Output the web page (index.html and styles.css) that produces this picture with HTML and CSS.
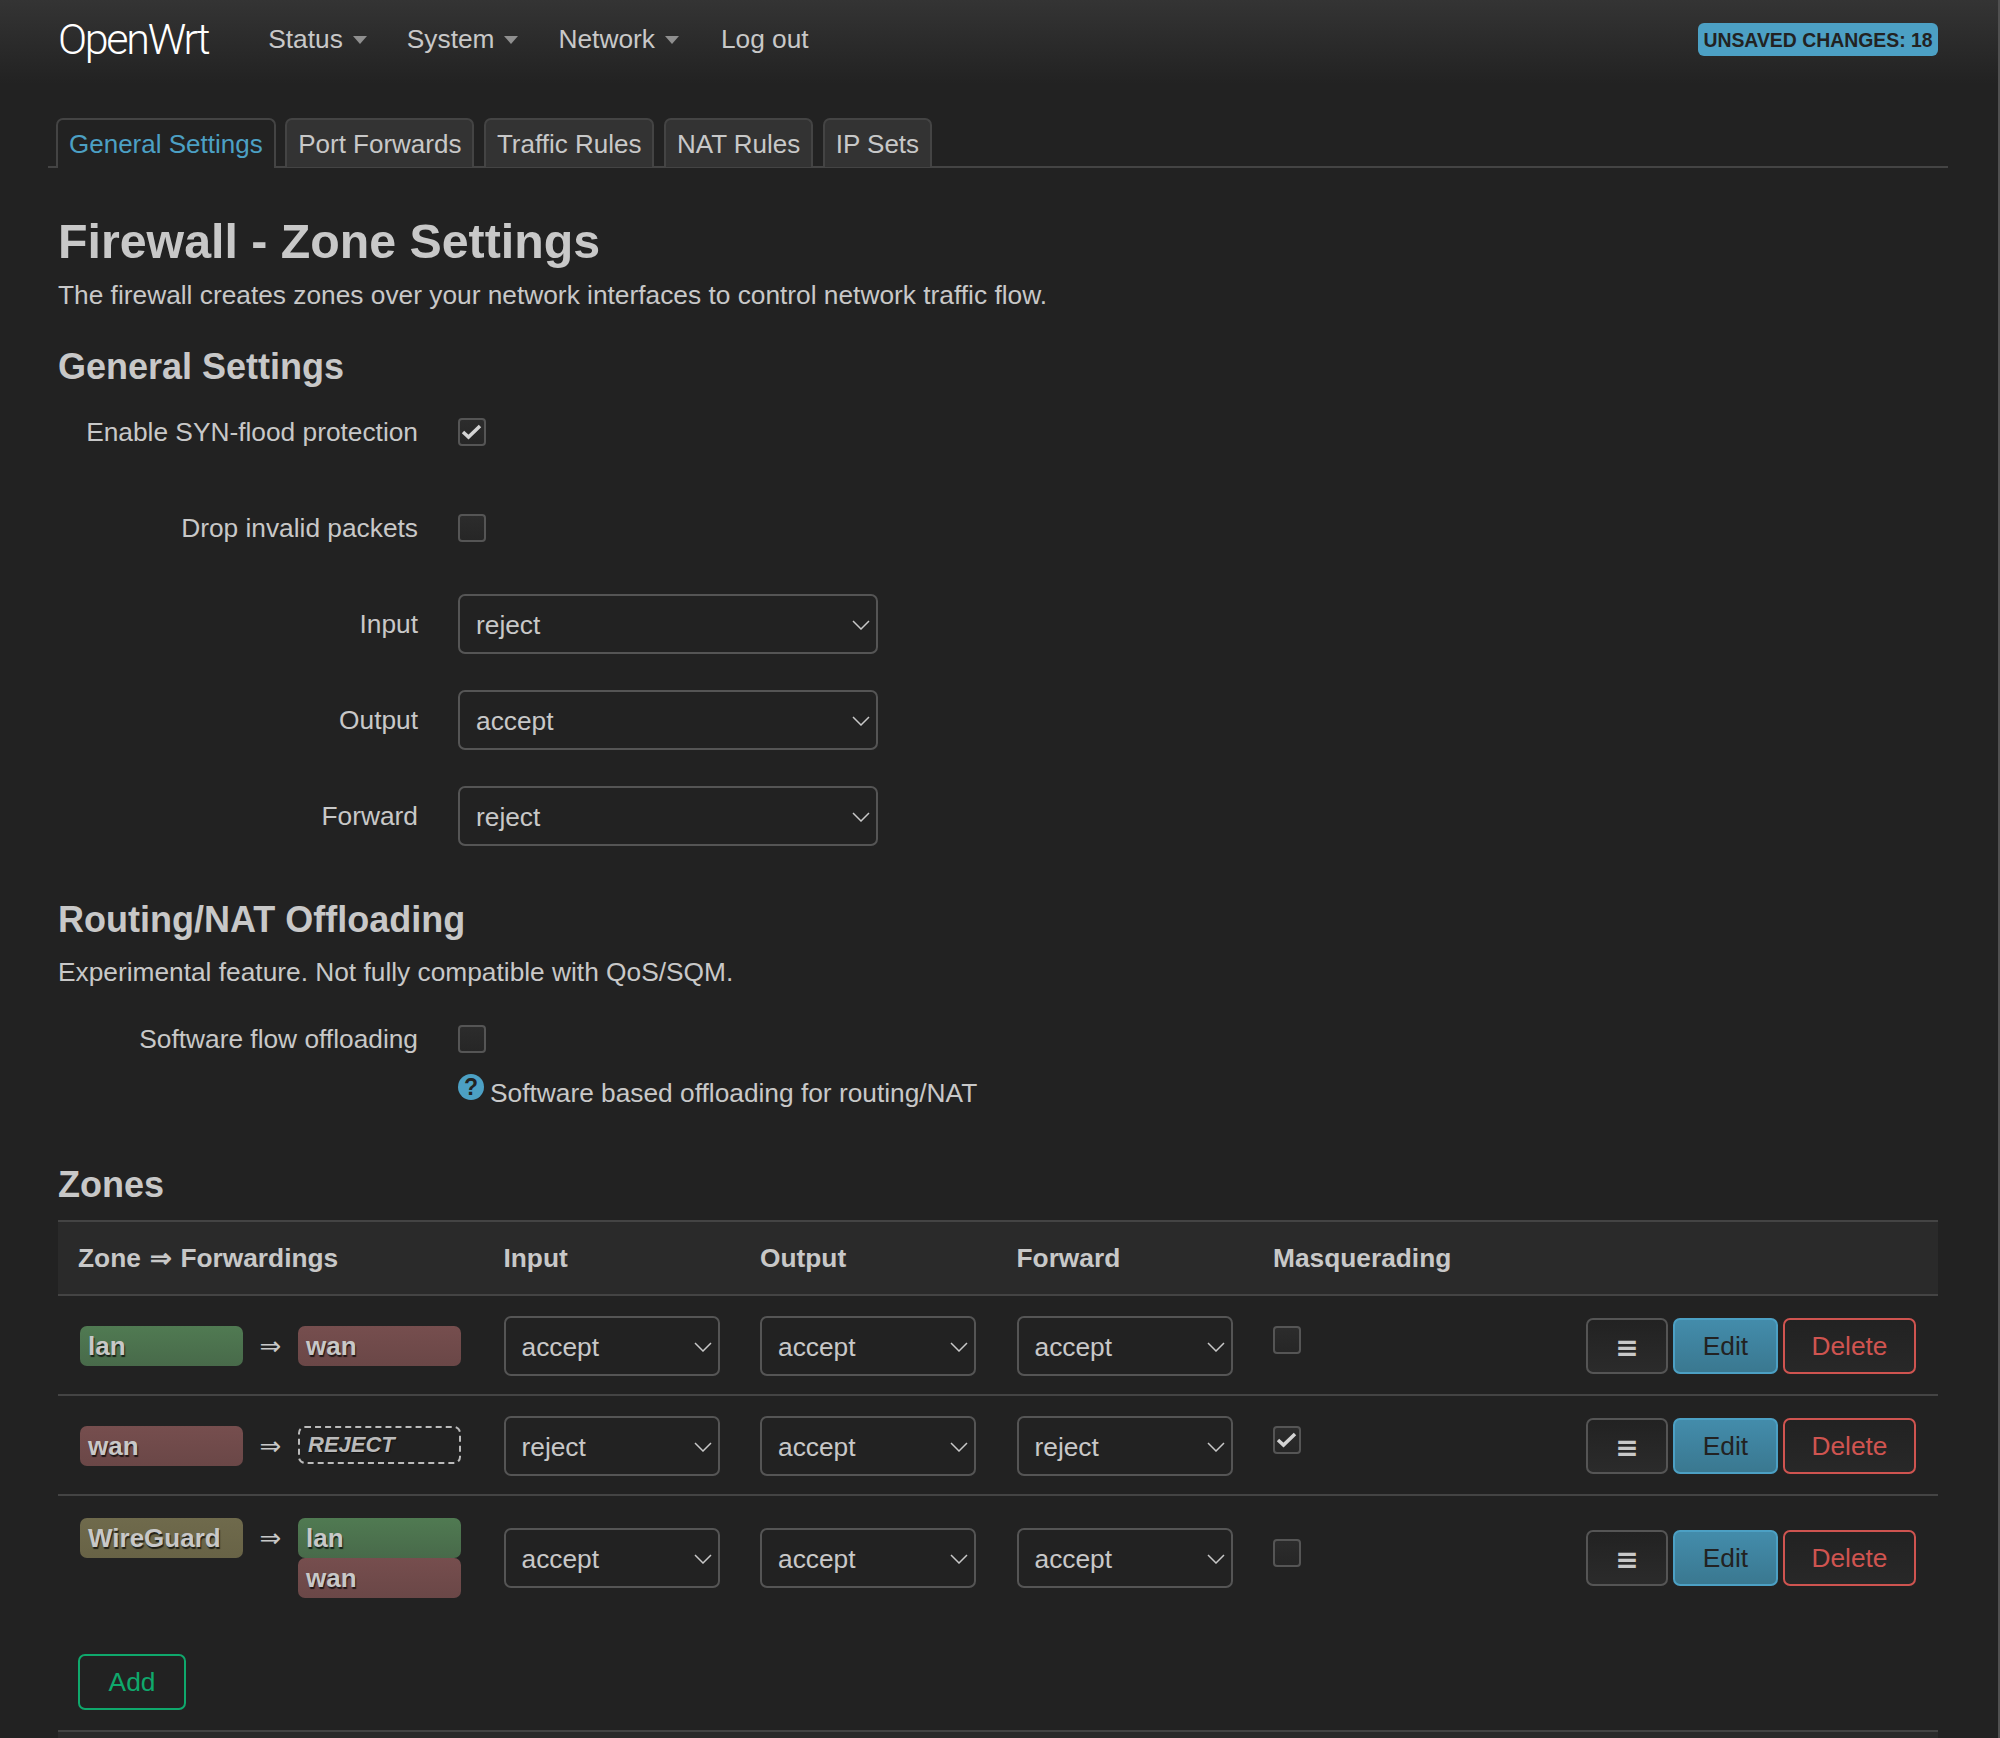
FILE: index.html
```html
<!DOCTYPE html>
<html lang="en">
<head>
<meta charset="utf-8">
<title>Firewall - Zone Settings - OpenWrt</title>
<link rel="stylesheet" href="styles.css">
</head>
<body>
<header class="topbar">
  <a class="brand">OpenWrt</a>
  <nav class="menu">
    <a class="menu-item">Status<i class="caret"></i></a>
    <a class="menu-item">System<i class="caret"></i></a>
    <a class="menu-item">Network<i class="caret"></i></a>
    <a class="menu-item logout">Log out</a>
  </nav>
  <span class="unsaved">UNSAVED CHANGES: 18</span>
</header>
<main class="page">
  <ul class="tabs">
    <li class="tab active">General Settings</li>
    <li class="tab">Port Forwards</li>
    <li class="tab">Traffic Rules</li>
    <li class="tab">NAT Rules</li>
    <li class="tab">IP Sets</li>
  </ul>
  <h2 class="title">Firewall - Zone Settings</h2>
  <p class="desc">The firewall creates zones over your network interfaces to control network traffic flow.</p>
  <h3 class="section first">General Settings</h3>
  <div class="row"><label class="row-label">Enable SYN-flood protection</label>
    <span class="check"><svg viewBox="0 0 24 24"><path d="M3 12l5.500 5L20 6" /></svg></span></div>
  <div class="row"><label class="row-label">Drop invalid packets</label><span class="check"></span></div>
  <div class="row"><label class="row-label">Input</label>
    <span class="select wide">reject<svg viewBox="0 0 18 10"><path d="M1 1l8 8 8-8"/></svg></span></div>
  <div class="row"><label class="row-label">Output</label>
    <span class="select wide">accept<svg viewBox="0 0 18 10"><path d="M1 1l8 8 8-8"/></svg></span></div>
  <div class="row"><label class="row-label">Forward</label>
    <span class="select wide">reject<svg viewBox="0 0 18 10"><path d="M1 1l8 8 8-8"/></svg></span></div>
  <h3 class="section routing">Routing/NAT Offloading</h3>
  <p class="desc desc-routing">Experimental feature. Not fully compatible with QoS/SQM.</p>
  <div class="row row-soft"><label class="row-label">Software flow offloading</label><span class="check"></span></div>
  <div class="help-row">
    <span class="help-icon">?</span><span>Software based offloading for routing/NAT</span>
  </div>
  <h3 class="section zones">Zones</h3>
  <table class="zone-table">
    <thead>
      <tr>
        <th class="col-zone">Zone ⇒ Forwardings</th>
        <th class="col-sel">Input</th>
        <th class="col-sel">Output</th>
        <th class="col-sel">Forward</th>
        <th class="col-masq">Masquerading</th>
        <th class="col-act"></th>
      </tr>
    </thead>
    <tbody>
      <tr>
        <td><div class="zone-flow"><span class="zone lan">lan</span><span class="arrow">⇒</span><span class="zone-list"><span class="zone wan">wan</span></span></div></td>
        <td><span class="select">accept<svg viewBox="0 0 18 10"><path d="M1 1l8 8 8-8"/></svg></span></td>
        <td><span class="select">accept<svg viewBox="0 0 18 10"><path d="M1 1l8 8 8-8"/></svg></span></td>
        <td><span class="select">accept<svg viewBox="0 0 18 10"><path d="M1 1l8 8 8-8"/></svg></span></td>
        <td class="cell-masq"><span class="check"></span></td>
        <td><div class="actions"><button class="btn drag">≡</button><button class="btn edit">Edit</button><button class="btn del">Delete</button></div></td>
      </tr>
      <tr>
        <td><div class="zone-flow"><span class="zone wan">wan</span><span class="arrow">⇒</span><span class="zone-list"><span class="zone reject">REJECT</span></span></div></td>
        <td><span class="select">reject<svg viewBox="0 0 18 10"><path d="M1 1l8 8 8-8"/></svg></span></td>
        <td><span class="select">accept<svg viewBox="0 0 18 10"><path d="M1 1l8 8 8-8"/></svg></span></td>
        <td><span class="select">reject<svg viewBox="0 0 18 10"><path d="M1 1l8 8 8-8"/></svg></span></td>
        <td class="cell-masq"><span class="check"><svg viewBox="0 0 24 24"><path d="M3 12l5.500 5L20 6" /></svg></span></td>
        <td><div class="actions"><button class="btn drag">≡</button><button class="btn edit">Edit</button><button class="btn del">Delete</button></div></td>
      </tr>
      <tr>
        <td><div class="zone-flow"><span class="zone wg">WireGuard</span><span class="arrow">⇒</span><span class="zone-list"><span class="zone lan">lan</span><span class="zone wan">wan</span></span></div></td>
        <td><span class="select">accept<svg viewBox="0 0 18 10"><path d="M1 1l8 8 8-8"/></svg></span></td>
        <td><span class="select">accept<svg viewBox="0 0 18 10"><path d="M1 1l8 8 8-8"/></svg></span></td>
        <td><span class="select">accept<svg viewBox="0 0 18 10"><path d="M1 1l8 8 8-8"/></svg></span></td>
        <td class="cell-masq"><span class="check"></span></td>
        <td><div class="actions"><button class="btn drag">≡</button><button class="btn edit">Edit</button><button class="btn del">Delete</button></div></td>
      </tr>
    </tbody>
  </table>
  <div class="add-row"><button class="btn add">Add</button></div>
  <div class="next-section"></div>
</main>
</body>
</html>
```
FILE: styles.css
```css
* { box-sizing: border-box; }
html, body { margin: 0; padding: 0; }
body {
  width: 2000px;
  height: 1738px;
  overflow: hidden;
  background: #222;
  color: #c8c8c8;
  font-family: "Liberation Sans", Arial, sans-serif;
  font-size: 26.300px;
  line-height: 36px;
  border-right: 2px solid #505050;
}
.topbar {
  height: 84px;
  display: flex;
  align-items: center;
  padding: 0 60px 6px 58px;
  background: linear-gradient(#343434, #222);
}
.brand {
  font-family: Roboto, sans-serif;
  font-weight: 300;
  font-size: 43px;
  letter-spacing: -2.300px;
  color: #fff;
  margin-right: 60px;
}
.menu { display: flex; gap: 40px; flex: 1; }
.menu-item { display: flex; align-items: center; color: #c8c8c8; }
.logout { margin-left: 2px; }
.caret {
  width: 0;
  height: 0;
  margin-left: 10px;
  margin-top: 2px;
  border-left: 7.5px solid transparent;
  border-right: 7.5px solid transparent;
  border-top: 8px solid #8f8f8f;
}
.unsaved {
  height: 33px;
  width: 240px;
  padding-top: 1px;
  border-radius: 6px;
  background: #4ca0c4;
  color: #222;
  font-weight: 700;
  font-size: 19.400px;
  line-height: 33px;
  text-align: center;
  white-space: nowrap;
}
.page { padding: 34px 60px 0 58px; position: relative; }
.tabs {
  display: flex;
  gap: 9.500px;
  list-style: none;
  margin: 0 -10px 0 -10px;
  padding: 0 0 0 8px;
  height: 50px;
  border-bottom: 2px solid #444;
}
.tab {
  height: 49px;
  padding: 6px 11px 0;
  background: #333;
  border: 2px solid #444;
  border-bottom: 0;
  border-radius: 7px 7px 0 0;
  font-size: 26px;
  white-space: nowrap;
}
.tab.active {
  height: 50px;
  background: #222;
  color: #4ca0c4;
}
.title {
  margin: 44px 0 0;
  font-size: 48.300px;
  line-height: 58px;
  font-weight: 700;
}
.desc { margin: 0; line-height: 36px; }
.title + .desc { margin-top: 7px; }
.section {
  margin: 0;
  font-size: 36px;
  line-height: 44px;
  font-weight: 700;
}
.section.first { margin-top: 32px; }
.section.routing { margin-top: 51.500px; }
.section.zones { margin-top: 52px; }
.row {
  height: 60px;
  margin-bottom: 36px;
  display: flex;
  align-items: center;
}
.section.first + .row { margin-top: 13px; margin-bottom: 36px; }
.row-label { width: 360px; padding-right: 0; text-align: right; margin-right: 40px; white-space: nowrap; }
.check {
  display: block;
  width: 28px;
  height: 28px;
  border: 2px solid #555;
  border-radius: 4px;
  background: linear-gradient(#2c2c2c, #262626);
}
.check svg { display: block; width: 24px; height: 24px; }
.check path { fill: none; stroke: #d4d4d4; stroke-width: 3.500; }
.select {
  display: flex;
  align-items: center;
  position: relative;
  width: 216px;
  height: 60px;
  padding: 2px 16px 0;
  border: 2px solid #555;
  border-radius: 7px;
}
.select.wide { width: 420px; }
.select svg {
  position: absolute;
  right: 6px;
  top: 24px;
  width: 18px;
  height: 10px;
}
.select path { fill: none; stroke: #c8c8c8; stroke-width: 1.500; }
.desc-routing { margin-top: 12px; }
.row-soft { margin: 19px 0 0; }
.help-row {
  display: flex;
  margin: 2px 0 0 400px;
  height: 40px;
  align-items: flex-end;
}
.help-icon {
  width: 26px;
  height: 26px;
  margin-right: 6px;
  margin-bottom: 11px;
  border-radius: 50%;
  background: #4ca0c4;
  color: #222;
  font-weight: 700;
  font-size: 23px;
  line-height: 26px;
  text-align: center;
}
.zone-table {
  width: 1880px;
  margin-top: 13px;
  table-layout: fixed;
  border-collapse: collapse;
  border-top: 2px solid #444;
}
.zone-table thead tr { background: #2a2a2a; border-bottom: 2px solid #444; }
.zone-table tbody tr { border-bottom: 2px solid #444; }
.zone-table tbody tr:last-child { border-bottom: 0; }
.zone-table th {
  height: 74px;
  padding: 0 20px;
  text-align: left;
  font-weight: 700;
  white-space: nowrap;
}
.zone-table th.col-zone { width: 425.500px; word-spacing: 1.500px; }
.col-sel { width: 256.500px; }
.col-masq { width: 220px; }
.zone-table td { padding: 20px 20px 18px; vertical-align: middle; }
.zone-table td.cell-masq { padding-bottom: 30px; }
.zone-table tr:last-child td { padding-top: 22px; padding-bottom: 22px; }
.zone-table tr:last-child td.cell-masq { padding-bottom: 32px; }
.zone-flow { display: flex; align-items: flex-start; margin-left: 2px; margin-right: -1px; }
.zone-list { display: flex; flex-direction: column; }
.zone {
  display: block;
  width: 163px;
  height: 40px;
  border-radius: 7px;
  padding-left: 8px;
  font-size: 26px;
  font-weight: 700;
  line-height: 41px;
  color: #c8c8c8;
  text-shadow: 1px 2px 1px rgba(0, 0, 0, 0.7);
}
.zone.lan { background: linear-gradient(#507a52, #486a4a); }
.zone.wan { background: linear-gradient(#764e4e, #6a4747); }
.zone.wg { background: linear-gradient(#6f6a4c, #686346); }
.zone.reject {
  height: 38px;
  line-height: 34px;
  padding-left: 8px;
  border: 2px dashed #bbb;
  font-style: italic;
  font-size: 22px;
  color: #bbb;
  text-shadow: 1px 1px 1px #111;
}
.arrow { width: 55px; text-align: center; line-height: 40px; font-family: "DejaVu Sans", sans-serif; font-size: 26px; color: #c8c8c8; }
.actions { display: flex; justify-content: flex-end; gap: 5px; margin-right: 2px; }
.btn {
  height: 56px;
  border: 2px solid #555;
  border-radius: 7px;
  background: linear-gradient(#222, #2b2b2b);
  color: #c8c8c8;
  font-family: "Liberation Sans", Arial, sans-serif;
  font-size: 26.300px;
  padding: 2px 0 0;
  text-align: center;
}
.btn.drag { width: 82px; font-family: "DejaVu Sans", sans-serif; font-size: 28px; padding-top: 4px; font-weight: 700; }
.btn.edit {
  width: 105px;
  background: linear-gradient(#438cab, #3a7890);
  border-color: #4ca0c4;
  color: #222;
}
.btn.del { width: 133px; border-color: #cf5450; color: #cf5450; background: linear-gradient(#222, #282828); }
.add-row { margin-top: 34px; padding-left: 20px; }
.btn.add { width: 108px; border-color: #0fa86c; color: #0fa86c; background: #222; }
.next-section {
  margin-top: 20px;
  height: 12px;
  background: #2a2a2a;
  border-top: 2px solid #444;
}
```
